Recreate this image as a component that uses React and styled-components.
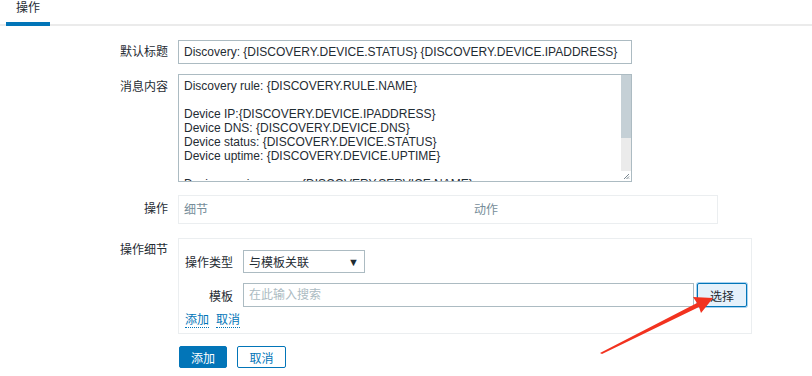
import React from 'react';
import styled, { createGlobalStyle } from 'styled-components';

const GlobalStyle = createGlobalStyle`
  body {
    margin: 0;
    background: #fff;
    color: #1f2c33;
    font-family: "Liberation Sans", Arial, "Noto Sans CJK SC", sans-serif;
    font-size: 12px;
  }
`;

const Page = styled.div`
  position: relative;
  width: 812px;
  height: 376px;
  overflow: hidden;
`;

const TabBar = styled.div`
  display: flex;
  height: 24px;
  border-bottom: 2px solid #ebebeb;
`;

const Tab = styled.div`
  margin-left: 6px;
  width: 44px;
  height: 26px;
  box-sizing: border-box;
  margin-bottom: -2px;
  border-bottom: 4px solid #0275b8;
  text-align: center;
  line-height: 16px;
`;

const Form = styled.div`
  padding-top: 14px;
`;

const Row = styled.div`
  display: grid;
  grid-template-columns: 168px auto;
  column-gap: 10px;
  align-items: start;
  margin-bottom: ${(p) => p.$gap || 0}px;
`;

const Label = styled.div`
  text-align: right;
  padding-top: ${(p) => p.$top || 5}px;
  line-height: 14px;
`;

const TextInput = styled.input`
  box-sizing: border-box;
  width: ${(p) => p.$w}px;
  height: ${(p) => p.$h || 24}px;
  margin: 0;
  padding: 0 5px;
  border: 1px solid #acbbc2;
  border-radius: 0;
  font: inherit;
  color: #1f2c33;
  outline: none;
  &::placeholder {
    color: #acbbc2;
  }
`;

const MessageBox = styled.div`
  box-sizing: border-box;
  display: flex;
  width: 454px;
  height: 108px;
  border: 1px solid #acbbc2;
`;

const MessageText = styled.div`
  flex: 1;
  padding: 4px 5px;
  white-space: pre;
  overflow: hidden;
  line-height: 14px;
`;

const ScrollTrack = styled.div`
  width: 10px;
  display: flex;
  flex-direction: column;
  background: #ebebeb;
`;

const ScrollThumb = styled.div`
  height: 63px;
  background: #c5d0d6;
`;

const ScrollRest = styled.div`
  flex: 1;
`;

const Grip = styled.svg`
  display: block;
  background: #fff;
`;

const OpsTable = styled.div`
  box-sizing: border-box;
  width: 540px;
  height: 29px;
  border: 1px solid #ebeef0;
  display: flex;
  align-items: center;
  padding: 0 5px;
`;

const OpsHead = styled.div`
  width: ${(p) => p.$w}px;
  color: #768d99;
  line-height: 14px;
`;

const DetailBox = styled.div`
  box-sizing: border-box;
  width: 574px;
  border: 1px solid #ebeef0;
  padding: 11px 6px 5px 5px;
`;

const SubRow = styled.div`
  display: grid;
  grid-template-columns: 49px auto;
  column-gap: 10px;
  align-items: center;
  margin-bottom: ${(p) => p.$gap || 0}px;
`;

const SubLabel = styled.div`
  text-align: right;
  white-space: nowrap;
`;

const Select = styled.div`
  box-sizing: border-box;
  width: 122px;
  height: 23px;
  border: 1px solid #acbbc2;
  display: flex;
  align-items: center;
  justify-content: space-between;
  padding: 0 5px 0 5px;
`;

const Caret = styled.span`
  font-size: 11px;
  color: #1f2c33;
`;

const Combo = styled.div`
  display: flex;
  align-items: center;
  gap: 3px;
`;

const PickButton = styled.button`
  box-sizing: border-box;
  width: 50px;
  height: 24px;
  margin: 0;
  border: 1px solid #0275b8;
  border-radius: 2px;
  background: #e5f1fb;
  box-shadow: 0 0 0 1px #a9d2f0;
  font: inherit;
  color: #1f2c33;
`;

const Links = styled.div`
  display: flex;
  gap: 7px;
  padding-left: 1px;
`;

const Link = styled.span`
  color: #0275b8;
  border-bottom: 1px dotted #0275b8;
  line-height: 13px;
`;

const Actions = styled.div`
  display: flex;
  gap: 10px;
  margin-left: 179px;
`;

const Button = styled.button`
  box-sizing: border-box;
  height: 22px;
  width: ${(p) => p.$w}px;
  margin: 0;
  padding: 0;
  border: 1px solid #0275b8;
  border-radius: 2px;
  font: inherit;
  background: ${(p) => (p.$primary ? '#0275b8' : '#fff')};
  color: ${(p) => (p.$primary ? '#fff' : '#0275b8')};
`;

const Overlay = styled.svg`
  position: absolute;
  left: 0;
  top: 0;
  pointer-events: none;
`;

// only the lines that show in the box, the rest is scrolled away
const message = `Discovery rule: {DISCOVERY.RULE.NAME}

Device IP:{DISCOVERY.DEVICE.IPADDRESS}
Device DNS: {DISCOVERY.DEVICE.DNS}
Device status: {DISCOVERY.DEVICE.STATUS}
Device uptime: {DISCOVERY.DEVICE.UPTIME}

Device service name: {DISCOVERY.SERVICE.NAME}`;

export default function App() {
  return (
    <Page>
      <GlobalStyle />
      <TabBar>
        <Tab>操作</Tab>
      </TabBar>
      <Form>
        <Row $gap={10}>
          <Label>默认标题</Label>
          <TextInput
            $w={454}
            readOnly
            value="Discovery: {DISCOVERY.DEVICE.STATUS} {DISCOVERY.DEVICE.IPADDRESS}"
          />
        </Row>
        <Row $gap={13}>
          <Label $top={6}>消息内容</Label>
          <MessageBox>
            <MessageText>{message}</MessageText>
            <ScrollTrack>
              <ScrollThumb />
              <ScrollRest />
              <Grip width="10" height="10" viewBox="0 0 10 10">
                <path d="M8 3 L3 8 M8 5.5 L5.5 8 M8 7.5 L7.5 8" stroke="#7a8790" strokeWidth="1" />
              </Grip>
            </ScrollTrack>
          </MessageBox>
        </Row>
        <Row $gap={14}>
          <Label $top={7}>操作</Label>
          <OpsTable>
            <OpsHead $w={290}>细节</OpsHead>
            <OpsHead $w={100}>动作</OpsHead>
          </OpsTable>
        </Row>
        <Row $gap={12}>
          <Label $top={5}>操作细节</Label>
          <DetailBox>
            <SubRow $gap={10}>
              <SubLabel>操作类型</SubLabel>
              <Select>
                <span>与模板关联</span>
                <Caret>▼</Caret>
              </Select>
            </SubRow>
            <SubRow $gap={7}>
              <SubLabel>模板</SubLabel>
              <Combo>
                <TextInput $w={451} placeholder="在此输入搜索" readOnly />
                <PickButton>选择</PickButton>
              </Combo>
            </SubRow>
            <Links>
              <Link>添加</Link>
              <Link>取消</Link>
            </Links>
          </DetailBox>
        </Row>
        <Actions>
          <Button $primary $w={48}>添加</Button>
          <Button $w={49}>取消</Button>
        </Actions>
      </Form>
      <Overlay width="812" height="376" viewBox="0 0 812 376">
        <polygon
          points="600,353 697,303 693,297 713,298 701,313 699,307 602,354"
          fill="#f2321f"
        />
      </Overlay>
    </Page>
  );
}
